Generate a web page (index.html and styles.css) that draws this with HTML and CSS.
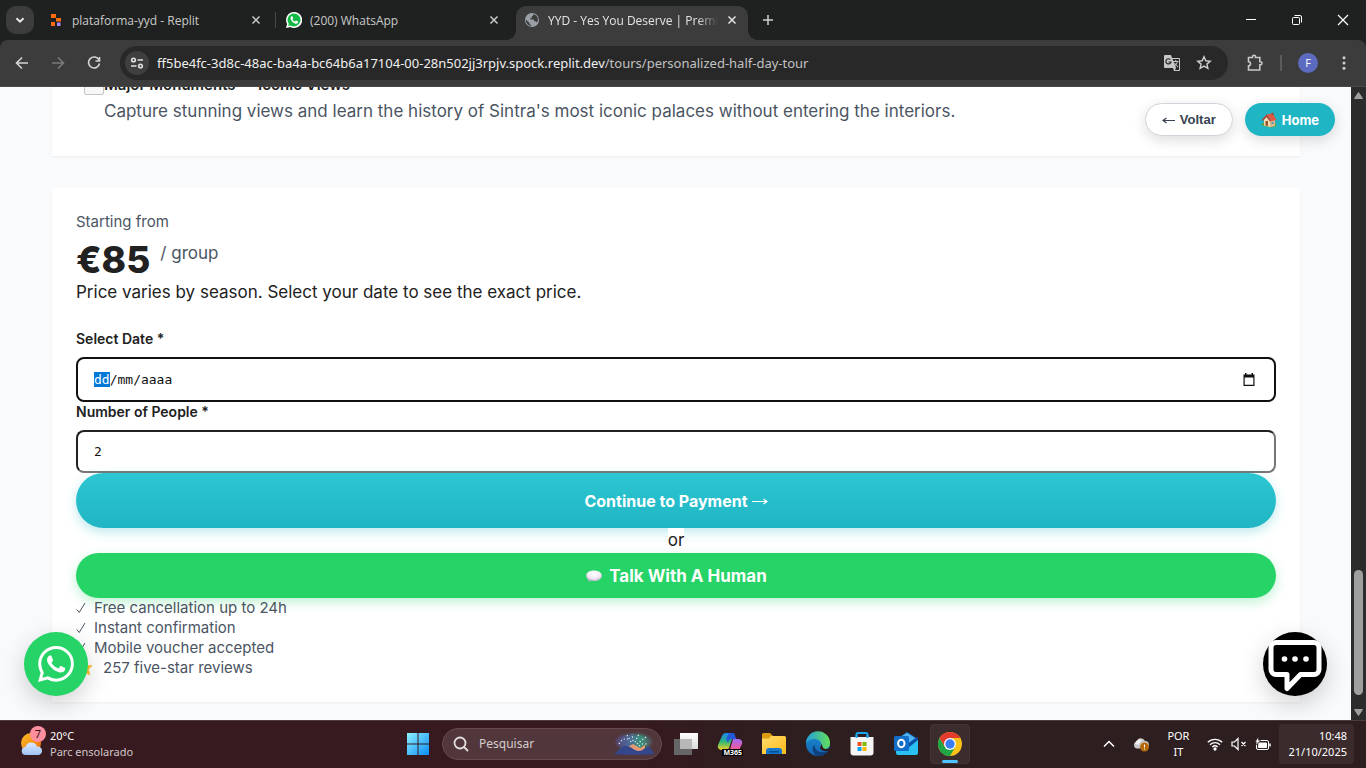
FILE: index.html
```html
<!DOCTYPE html>
<html lang="pt">
<head>
<meta charset="utf-8">
<meta name="viewport" content="width=device-width, initial-scale=1">
<title>YYD - Yes You Deserve | Premium Tours</title>
<link rel="stylesheet" href="styles.css">
</head>
<body>
<header class="tabstrip">
  <button class="tab-search" aria-label="Search tabs"><svg width="14" height="14" viewBox="0 0 14 14" fill="none" stroke="#e8e8e8" stroke-width="2"><path d="M3.5 5.2 7 8.7l3.500-3.500"/></svg></button>
  <div class="tab">
    <svg class="favicon" width="16" height="16" viewBox="0 0 16 16"><path fill="#ff6a0d" d="M3 2h5v4H3zM8 6h5v3.500H8zM3 10h4v4H3z"/><path fill="#a78bfa" d="M9 10.500h3.500V14H9z"/></svg>
    <span class="tab-title">plataforma-yyd - Replit</span>
    <button class="tab-close" aria-label="Close tab"><svg width="10" height="10" viewBox="0 0 10 10" stroke="currentColor" stroke-width="1.500"><path d="m1.500 1.500 7 7m0-7-7 7"/></svg></button>
  </div>
  <span class="tab-divider"></span>
  <div class="tab">
    <svg class="favicon" width="16" height="16" viewBox="0 0 32 32"><path fill="#fff" d="M16 0a16 16 0 1 1-7.500 30L0 32l2.200-8A16 16 0 0 1 16 0z"/><path fill="#12b944" d="M16 3a13 13 0 1 1-7 24l-4.600 1.200 1.300-4.500A13 13 0 0 1 16 3z"/><path fill="#fff" d="M11 8.500c-4 3-1 8.500 3 12s7.500 4 10 1v-2.500l-4-2-2 2c-2-.6-4-2.500-4.800-4.500l1.300-2-1.800-4z"/></svg>
    <span class="tab-title">(200) WhatsApp</span>
    <button class="tab-close" aria-label="Close tab"><svg width="10" height="10" viewBox="0 0 10 10" stroke="currentColor" stroke-width="1.500"><path d="m1.500 1.500 7 7m0-7-7 7"/></svg></button>
  </div>
  <div class="tab tab-active">
    <svg class="favicon" width="16" height="16" viewBox="0 0 16 16"><circle cx="8" cy="8" r="7" fill="#9aa0a6"/><path fill="#3c3c3c" d="M2 7.500 5.500 11v1l1.500 1v1.200A6 6 0 0 1 2 7.500zM9 2.200c3 .3 5 2.800 5 5.600l-1 2.700-1.500-1.200H10V7.500H6.500V6L8 5.500V4h1z"/></svg>
    <span class="tab-title">YYD - Yes You Deserve | Premium Tours</span>
    <button class="tab-close" aria-label="Close tab"><svg width="10" height="10" viewBox="0 0 10 10" stroke="currentColor" stroke-width="1.500"><path d="m1.500 1.500 7 7m0-7-7 7"/></svg></button>
  </div>
  <button class="new-tab" aria-label="New tab"><svg width="12" height="12" viewBox="0 0 12 12" stroke="#d0d0d0" stroke-width="1.500"><path d="M6 1v10M1 6h10"/></svg></button>
  <div class="window-controls">
    <button aria-label="Minimize"><svg width="12" height="12" viewBox="0 0 12 12" stroke="#fff" stroke-width="1"><path d="M1 5.500h10"/></svg></button>
    <button aria-label="Restore"><svg width="12" height="12" viewBox="0 0 12 12" fill="none" stroke="#fff"><rect x="1.500" y="3.500" width="7" height="7" rx="1"/><path d="M3.500 1.500H9a1.500 1.500 0 0 1 1.500 1.500v5.500"/></svg></button>
    <button aria-label="Close"><svg width="12" height="12" viewBox="0 0 12 12" stroke="#fff" stroke-width="1.200"><path d="m1 1 10 10M11 1 1 11"/></svg></button>
  </div>
</header>

<nav class="toolbar">
  <button class="tool" aria-label="Back"><svg width="14" height="14" viewBox="0 0 14 14" fill="none" stroke="#d4d4d4" stroke-width="1.600"><path d="M13 7H2m5-5.500L1.500 7 7 12.500"/></svg></button>
  <button class="tool" aria-label="Forward"><svg width="14" height="14" viewBox="0 0 14 14" fill="none" stroke="#7a7a7a" stroke-width="1.600"><path d="M1 7h11M7 1.500 12.500 7 7 12.500"/></svg></button>
  <button class="tool" aria-label="Reload"><svg width="14" height="14" viewBox="0 0 14 14" fill="none" stroke="#d4d4d4" stroke-width="1.600"><path d="M12 4A5.500 5.500 0 1 0 12.500 7.500M12.500 1v4H8.500"/></svg></button>
  <div class="omnibox">
    <button class="site-info" aria-label="Site information"><svg width="14" height="14" viewBox="0 0 14 14" fill="none" stroke="#e0e0e0" stroke-width="1.600"><circle cx="3.500" cy="4" r="1.800"/><path d="M7.500 4H13M1 10h5.500"/><circle cx="10.500" cy="10" r="1.800"/></svg></button>
    <span class="url">ff5be4fc-3d8c-48ac-ba4a-bc64b6a17104-00-28n502jj3rpjv.spock.replit.dev<span class="url-path">/tours/personalized-half-day-tour</span></span>
    <button class="omni-action" aria-label="Translate"><svg width="18" height="18" viewBox="0 0 18 18"><path fill="#c7c7c7" d="M2 1h6l1 3h7a1 1 0 0 1 1 1v11a1 1 0 0 1-1 1h-5l-1-3H2a1 1 0 0 1-1-1V2a1 1 0 0 1 1-1z"/><path fill="#282828" d="M9.500 5H16v11h-4l1-2-1-3z"/><path fill="none" stroke="#282828" stroke-width="1.200" d="M7.400 5.600A2.600 2.600 0 1 0 8 8H5.500"/><path fill="none" stroke="#c7c7c7" d="M10 7.500h5.500M12.700 6v1.500M14.500 7.500c-.5 2-1.500 3-3 4.500m0-3 3.500 4"/></svg></button>
    <button class="omni-action" aria-label="Bookmark"><svg width="16" height="16" viewBox="0 0 16 16" fill="none" stroke="#d0d0d0" stroke-width="1.400"><path d="m8 1.800 1.800 4 4.400.4-3.300 2.900 1 4.300L8 11.100l-3.900 2.300 1-4.300-3.300-2.900 4.400-.4z"/></svg></button>
  </div>
  <button class="tool" aria-label="Extensions"><svg width="18" height="18" viewBox="0 0 18 18" fill="none" stroke="#c7c7c7" stroke-width="1.600"><path d="M3.500 3.500h4V2.800a1.500 1.500 0 0 1 3 0v.7h4.300v4.200h.7a1.500 1.500 0 0 1 0 3h-.7V16H3.500v-4.200a2 2 0 0 0 0-4z"/></svg></button>
  <span class="tool-divider"></span>
  <button class="tool" aria-label="Profile"><span class="avatar">F</span></button>
  <button class="tool tool-last" aria-label="Menu"><svg width="4" height="14" viewBox="0 0 4 14" fill="#d0d0d0"><circle cx="2" cy="1.800" r="1.500"/><circle cx="2" cy="7" r="1.500"/><circle cx="2" cy="12.200" r="1.500"/></svg></button>
</nav>

<div class="viewport">
  <main class="page">
    <section class="card itinerary">
      <span class="missing-icon"></span>
      <div>
        <h3 class="stop-title">Major Monuments — Iconic Views</h3>
        <p class="stop-text">Capture stunning views and learn the history of Sintra's most iconic palaces without entering the interiors.</p>
      </div>
    </section>

    <form class="card booking" onsubmit="return false">
      <p class="small muted">Starting from</p>
      <p class="price"><strong>€85</strong><span class="muted">/ group</span></p>
      <p class="price-note">Price varies by season. Select your date to see the exact price.</p>

      <label class="label" for="date">Select Date *</label>
      <div class="date-field">
        <input class="input-text" id="date" type="text" value="dd/mm/aaaa" autocomplete="off" spellcheck="false">
        <button class="calendar" type="button" aria-label="Open calendar"><svg width="14" height="14" viewBox="0 0 14 14"><path fill="#111" d="M3 0h1.500v1.500h5V0H11v1.500h1.500V13h-11V1.500H3zM2.700 4.500v7.300h8.600V4.500z"/></svg></button>
      </div>
      <label class="label" for="people">Number of People *</label>
      <input class="input-text people" id="people" type="number" value="2">

      <button class="btn btn-pay" type="submit">Continue to Payment <svg width="16" height="10" viewBox="0 0 16 10" fill="none" stroke="#fff" stroke-width="1.200"><path d="M0 5.500h14.500M11.500 3 15 5.500 11.500 8"/></svg></button>
      <p class="or"><span>or</span></p>
      <button class="btn btn-human" type="button"><svg width="18" height="14" viewBox="0 0 18 14"><defs><radialGradient id="bub" cx=".5" cy=".3" r=".7"><stop offset="0" stop-color="#fff"/><stop offset=".6" stop-color="#f1e9f4"/><stop offset="1" stop-color="#bda9cb"/></radialGradient></defs><path fill="url(#bub)" d="M9 1.500c4.600 0 7.800 2.200 7.800 5.200S13.600 12 9 12c-1.200 0-2.300-.1-3.200-.4-.8.6-1.900 1-3 .9.600-.5.800-1.200.7-1.900C2 9.700 1.200 8.300 1.200 6.700c0-3 3.200-5.200 7.800-5.200z"/></svg>Talk With A Human</button>

      <ul class="perks small muted">
        <li><svg width="10" height="12" viewBox="0 0 10 12" fill="none" stroke="currentColor"><path d="M.8 7.500 3.200 10.500 9 1"/></svg>Free cancellation up to 24h</li>
        <li><svg width="10" height="12" viewBox="0 0 10 12" fill="none" stroke="currentColor"><path d="M.8 7.500 3.200 10.500 9 1"/></svg>Instant confirmation</li>
        <li><svg width="10" height="12" viewBox="0 0 10 12" fill="none" stroke="currentColor"><path d="M.8 7.500 3.200 10.500 9 1"/></svg>Mobile voucher accepted</li>
        <li><svg width="19" height="18" viewBox="0 0 19 18"><path fill="#fbc02d" d="m9 1 2.300 5 5.400.6-4 3.700 1.600 6.200L9 13.800l-4.800 2.700 1.100-6.200-4-3.700L6.700 6z"/></svg>257 five-star reviews</li>
      </ul>
    </form>

    <div class="quick-nav">
      <button class="pill pill-back"><svg width="13" height="10" viewBox="0 0 13 10" fill="none" stroke="currentColor" stroke-width="1.200"><path d="M13 5.500H1m3.500-2.500L1 5.500 4.500 8"/></svg>Voltar</button>
      <a class="pill pill-home" href="#"><svg width="16" height="16" viewBox="0 0 16 16"><path fill="#5fa640" d="M1 11h14v3.500l-5 1-9-2z"/><path fill="#f0dcb0" d="M3 7.500 5.500 5 9 9v6l-6-1.500z"/><path fill="#d9b988" d="M9 8h5v6l-5 1.200z"/><path fill="#de5a45" d="m5.500 2.500 6-1.200L15.500 8 10 9.300z"/><path fill="#b83e33" d="m.8 8 4.700-5.500L10 9l-.8.800L5.500 5 1.700 9z"/><path fill="#9a5330" d="M4.500 9H7v5l-2.500-.6z"/><path fill="#4a9cc7" d="M10.500 10h2v2h-2z"/><path fill="#a8442f" d="M10.500.8h2v2.500h-2z"/></svg>Home</a>
    </div>

    <a class="fab fab-whatsapp" href="#" aria-label="WhatsApp"><svg width="36" height="36" viewBox="0 0 24 24" fill="#fff"><path d="M17.472 14.382c-.297-.149-1.758-.867-2.030-.967-.273-.099-.471-.148-.670.150-.197.297-.767.966-.940 1.164-.173.199-.347.223-.644.075-.297-.150-1.255-.463-2.390-1.475-.883-.788-1.480-1.761-1.653-2.059-.173-.297-.018-.458.130-.606.134-.133.298-.347.446-.520.149-.174.198-.298.298-.497.099-.198.050-.371-.025-.520-.075-.149-.669-1.612-.916-2.207-.242-.579-.487-.500-.669-.510-.173-.008-.371-.010-.570-.010-.198 0-.520.074-.792.372-.272.297-1.040 1.016-1.040 2.479 0 1.462 1.065 2.875 1.213 3.074.149.198 2.096 3.200 5.077 4.487.709.306 1.262.489 1.694.625.712.227 1.360.195 1.871.118.571-.085 1.758-.719 2.006-1.413.248-.694.248-1.289.173-1.413-.074-.124-.272-.198-.570-.347m-5.421 7.403h-.004a9.870 9.870 0 0 1-5.031-1.378l-.361-.214-3.741.982.998-3.648-.235-.374a9.860 9.860 0 0 1-1.510-5.260c.001-5.450 4.436-9.884 9.888-9.884 2.640 0 5.122 1.030 6.988 2.898a9.825 9.825 0 0 1 2.893 6.994c-.003 5.450-4.437 9.884-9.885 9.884m8.413-18.297A11.815 11.815 0 0 0 12.050 0C5.495 0 .160 5.335.157 11.892c0 2.096.547 4.142 1.588 5.945L.057 24l6.305-1.654a11.882 11.882 0 0 0 5.683 1.448h.005c6.554 0 11.890-5.335 11.893-11.893a11.821 11.821 0 0 0-3.480-8.413z"/></svg></a>
    <button class="fab fab-chat" aria-label="Chat"><svg width="64" height="64" viewBox="0 0 64 64"><path d="M13 10.500h38a5 5 0 0 1 5 5v22a5 5 0 0 1-5 5H37.500L24 56.500V42.500H13a5 5 0 0 1-5-5v-22a5 5 0 0 1 5-5z" fill="none" stroke="#fff" stroke-width="5" stroke-linejoin="round"/><g fill="#fff"><circle cx="21.500" cy="27" r="2.800"/><circle cx="32" cy="27" r="2.800"/><circle cx="43" cy="27" r="2.800"/></g></svg></button>
  </main>
  <div class="scrollbar">
    <svg width="9" height="9" viewBox="0 0 9 9" fill="#9f9f9f" stroke="#9f9f9f" stroke-linejoin="round"><path d="M4.500 1.500 8.500 7.500h-8z"/></svg>
    <span class="thumb"></span>
    <svg width="9" height="9" viewBox="0 0 9 9" fill="#9f9f9f" stroke="#9f9f9f" stroke-linejoin="round"><path d="M4.500 7.500.5 1.500h8z"/></svg>
  </div>
</div>

<footer class="taskbar">
  <div class="weather">
    <div class="weather-icon">
      <svg width="24" height="24" viewBox="0 0 24 24"><defs><linearGradient id="sun" x1="0" y1="0" x2="1" y2="1"><stop offset="0" stop-color="#fbbf24"/><stop offset="1" stop-color="#ee6a10"/></linearGradient><linearGradient id="cl" x1="0" y1="0" x2="0" y2="1"><stop offset="0" stop-color="#dcebff"/><stop offset="1" stop-color="#9fc1f5"/></linearGradient></defs><circle cx="11" cy="11" r="10" fill="url(#sun)"/><path fill="url(#cl)" d="M6 23a4 4 0 0 1-.5-8 6 6 0 0 1 11.500-.5A4.300 4.300 0 0 1 18.500 23z"/></svg>
      <span class="badge">7</span>
    </div>
    <div><div class="temp">20°C</div><div class="sky">Parc ensolarado</div></div>
  </div>

  <div class="apps">
    <button class="app" aria-label="Start"><svg width="24" height="24" viewBox="0 0 24 24"><defs><linearGradient id="win" x1="0" y1="0" x2="1" y2="1"><stop offset="0" stop-color="#8df1ff"/><stop offset="1" stop-color="#0a8df5"/></linearGradient></defs><path fill="url(#win)" d="M1 1h10.500v10.500H1zm11.500 0H23v10.500H12.500zM1 12.500h10.500V23H1zm11.500 0H23V23H12.500z"/></svg></button>
    <label class="search"><svg width="16" height="16" viewBox="0 0 16 16" fill="none" stroke="#e6dfe0" stroke-width="1.800"><circle cx="7" cy="7" r="5.500"/><path d="m11 11 4 4"/></svg><input type="search" placeholder="Pesquisar" aria-label="Pesquisar"><svg width="42" height="24" viewBox="0 0 42 24"><defs><linearGradient id="sky"><stop offset="0" stop-color="#54467f"/><stop offset=".4" stop-color="#4c6d99"/><stop offset=".7" stop-color="#35937c"/><stop offset="1" stop-color="#5b4c5d"/></linearGradient><filter id="soft"><feGaussianBlur stdDeviation="1.800"/></filter></defs><ellipse cx="21" cy="10" rx="18" ry="8" fill="url(#sky)" filter="url(#soft)"/><path fill="#e39a72" d="M11 17l9-5 7 4 5-3v9H11z"/><path fill="#34478c" d="M1 22c3-1 6-8 12-8 5 0 8 5 13 5 4 0 6-4 9-4s4 3 6 7c-3 1-37 1-40 0z"/><path stroke="#f5f2e4" stroke-width="1.200" stroke-dasharray="1.200 2.200" fill="none" d="M6 12q3-6 9-5M18 10l-4-7m6 6-1-7m3 8 4-8m-2 10 9-7m-7 9q5-4 9-1"/></svg></label>
    <button class="app" aria-label="Task view"><svg width="26" height="24" viewBox="0 0 26 24"><defs><linearGradient id="tv" x1="0" y1="0" x2="0" y2="1"><stop offset="0" stop-color="#fff"/><stop offset="1" stop-color="#d9d9d9"/></linearGradient></defs><path fill="url(#tv)" d="M7 1h18v16H7z"/><path fill="#666" d="M1 7h18v16H1z"/><path fill="#b8b8b8" d="M7 7h12v10H7z"/></svg></button>
    <button class="app" aria-label="Microsoft 365"><svg width="26" height="24" viewBox="0 0 26 24"><defs><linearGradient id="m1" x1="0" y1="0" x2="0" y2="1"><stop offset="0" stop-color="#1987ed"/><stop offset=".5" stop-color="#2cb77c"/><stop offset="1" stop-color="#f4d321"/></linearGradient><linearGradient id="m2" x1="0" y1="0" x2="0" y2="1"><stop offset="0" stop-color="#a06bf3"/><stop offset=".6" stop-color="#e45ba7"/><stop offset="1" stop-color="#fa7a5a"/></linearGradient></defs><path fill="url(#m1)" d="M9 1h8l-5 15q-1 2-3 2H4q-4-1-3-5L5 4q1-3 4-3z"/><path fill="#2358d8" d="M12 1h4q2 0 3 6h-5q-2 0-3 4L9 7z"/><path fill="url(#m2)" d="M16 7h6q4 1 3 5l-3 6q-1 3-3 3h-7z"/></svg><span class="m365">M365</span></button>
    <button class="app" aria-label="File Explorer"><svg width="26" height="24" viewBox="0 0 26 24"><defs><linearGradient id="fo" x1="0" y1="0" x2="1" y2="1"><stop offset="0" stop-color="#ffdc6d"/><stop offset="1" stop-color="#fdbb18"/></linearGradient></defs><path fill="#dc9c11" d="M2.500 1H9l3 3v5H1V2.500A1.500 1.500 0 0 1 2.500 1z"/><path fill="url(#fo)" d="M10 4h13.500A1.500 1.500 0 0 1 25 5.500V22H1V6.500h7z"/><path fill="#1377cc" d="M5 22v-3a3 3 0 0 1 3-3h10a3 3 0 0 1 3 3v3z"/><path fill="#0a4d91" d="M8 19h10v1.500H8z"/></svg></button>
    <button class="app" aria-label="Edge"><svg width="26" height="26" viewBox="0 0 26 26"><defs><linearGradient id="e1" x1="0" y1="0" x2="1" y2="0"><stop offset="0" stop-color="#249fdd"/><stop offset="1" stop-color="#62df58"/></linearGradient><linearGradient id="e2" x1="0" y1="0" x2="0" y2="1"><stop offset="0" stop-color="#1b8fd7"/><stop offset="1" stop-color="#1461ae"/></linearGradient></defs><circle cx="13" cy="13" r="12" fill="url(#e2)"/><path fill="url(#e1)" d="M1 12.500A12 12 0 0 1 25 12c0 4-3 6-6 6-2 0-4-1-4-2s1-1 1-3c0-3-3-5-7-5-5 0-8 4-8 4.500z"/><path fill="#0d3f7c" d="M9.500 14c0 6 6 9 13 6-2 3-5 5-9.500 5-5-1-7-9-3.500-11z"/><path fill="#2e1d1e" d="M15 16c1-1 1.400-2 .9-3.500C18 14.500 17 18 21 18c1.800 0 3.300-.8 4-1.800l-1.500 3.300c-4 1.500-8.500 0-8.500-3.500z"/></svg></button>
    <button class="app" aria-label="Store"><svg width="26" height="26" viewBox="0 0 26 26"><path fill="none" stroke="#1ca6ed" stroke-width="2" d="M7.500 8V3.500a1.500 1.500 0 0 1 1.500-1.500h8a1.500 1.500 0 0 1 1.500 1.500V8"/><path fill="#f5f5f5" d="M1.500 6h23v15.500a3 3 0 0 1-3 3h-17a3 3 0 0 1-3-3z"/><path fill="none" stroke="#1ca6ed" stroke-width="2" d="M7.500 4v3M18.500 4v3"/><path fill="#f25022" d="M8.500 11h4v4h-4z"/><path fill="#7fba00" d="M13.500 11h4v4h-4z"/><path fill="#00a4ef" d="M8.500 16h4v4h-4z"/><path fill="#ffb900" d="M13.500 16h4v4h-4z"/></svg></button>
    <button class="app" aria-label="Outlook"><svg width="26" height="26" viewBox="0 0 26 26"><path fill="#1479ce" d="M4 8 14 1l11 7v12H4z"/><path fill="#50b3f2" d="m9 5 5-3 8 5-8 7z"/><path fill="#29c1f2" d="M3 19h0l22-11v14a2 2 0 0 1-2 2H5a2 2 0 0 1-2-2z"/><path fill="#0b4ea5" d="m14 13 11-7v3l-10 8z"/><rect x="1" y="5" width="15" height="15" rx="1.500" fill="#126ec9"/><ellipse cx="8.300" cy="12.500" rx="3.200" ry="3.800" fill="none" stroke="#fff" stroke-width="2"/></svg></button>
    <button class="app app-active" aria-label="Chrome"><svg width="26" height="26" viewBox="0 0 26 26"><circle cx="13" cy="13" r="12" fill="#fbc116"/><path fill="#e33b2e" d="M2.600 7A12 12 0 0 1 23.400 7H13l-5.200 9z"/><path fill="#1fa446" d="M2.600 7A12 12 0 0 0 13 25l5.200-9H7.800z"/><circle cx="13" cy="13" r="6" fill="#fff"/><circle cx="13" cy="13" r="4.700" fill="#3a7df0"/></svg></button>
  </div>

  <div class="tray">
    <svg width="12" height="8" viewBox="0 0 12 8" fill="none" stroke="#fff" stroke-width="1.500"><path d="m1 6.500 5-5 5 5"/></svg>
    <svg class="cloud" width="16" height="16" viewBox="0 0 16 16"><path fill="#c9c9c9" d="M4 12.500A3.600 3.600 0 0 1 3.500 5.500 4.500 4.500 0 0 1 12 5a3.800 3.800 0 0 1 1 7.500z"/><path fill="#f1f1f1" d="M2 7.500a5 5 0 0 1 7-3.500L5 9z"/><circle cx="11.500" cy="11" r="4.500" fill="#b5690b"/><path stroke="#fff" d="M11.500 8.500v3m0 1v1"/></svg>
    <div class="lang">POR<br>IT</div>
    <div class="status">
      <svg width="16" height="14" viewBox="0 0 16 14" fill="none" stroke="#fff" stroke-width="1.300"><path d="M.8 5.300a10.200 10.200 0 0 1 14.400 0M3 7.700a7 7 0 0 1 10 0M5.300 10a4 4 0 0 1 5.400 0"/><circle cx="8" cy="12" r="1" fill="#fff"/></svg>
      <svg width="16" height="14" viewBox="0 0 16 14" fill="none" stroke="#fff"><path stroke-width="1.200" d="M1 5h2.500L7 1.500v11L3.500 9H1zM10.500 5l4 4m0-4-4 4"/></svg>
      <svg width="16" height="14" viewBox="0 0 16 14" fill="none" stroke="#fff"><rect x="1.500" y="3.500" width="12" height="9" rx="1.500"/><path fill="#fff" d="M4 6h7.500v4.500h-8z"/><path stroke-width="1.500" d="M15 6.500v3"/><path fill="#fff" stroke="#2e1d1e" stroke-width=".6" d="M3.500 0 0 5h2L1.500 8 5.500 3.500h-2z"/></svg>
    </div>
    <div class="clock">10:48<br>21/10/2025</div>
  </div>
</footer>
<script src="app.js"></script>
</body>
</html>
```
FILE: styles.css
```css
* { box-sizing: border-box; }
body {
  margin: 0;
  height: 100vh;
  display: flex;
  flex-direction: column;
  overflow: hidden;
  font-family: "Open Sans", "Noto Sans", sans-serif;
  font-size: 12px;
  background: #1f2120;
}
button {
  border: 0;
  padding: 0;
  background: none;
  font: inherit;
  color: inherit;
  display: flex;
  align-items: center;
  justify-content: center;
}
svg { display: block; flex: none; }
p, h3, ul { margin: 0; padding: 0; }

/* Tab strip */
.tabstrip {
  height: 40px;
  flex: none;
  display: flex;
  align-items: center;
  padding-left: 6px;
  background: #1f2120;
  color: #c9c9c9;
}
.tab-search {
  width: 28px;
  height: 28px;
  border-radius: 10px;
  background: #3c3c3c;
  margin-right: 3px;
}
.tab {
  width: 232px;
  height: 34px;
  margin: 6px 3px 0;
  padding: 0 10px 6px 8px;
  display: flex;
  align-items: center;
  gap: 8px;
  border-radius: 10px 10px 0 0;
}
.tab-divider { width: 1px; height: 16px; margin-right: -1px; background: #464746; }
.tab-active { background: #3c3c3c; color: #e4e4e4; position: relative; }
.tab-active::before,
.tab-active::after {
  content: "";
  position: absolute;
  bottom: 0;
  width: 10px;
  height: 10px;
}
.tab-active::before { right: 100%; background: radial-gradient(circle at 0 0, transparent 10px, #3c3c3c 10px); }
.tab-active::after { left: 100%; background: radial-gradient(circle at 100% 0, transparent 10px, #3c3c3c 10px); }
.tab-title { flex: 1; overflow: hidden; white-space: nowrap; }
.tab-active .tab-title { mask-image: linear-gradient(90deg, #000 88%, transparent); }
.tab-close { width: 12px; height: 16px; }
.new-tab { width: 28px; height: 28px; margin-left: 3px; }
.window-controls { margin-left: auto; display: flex; align-self: stretch; }
.window-controls button { width: 46px; }

/* Toolbar */
.toolbar {
  height: 47px;
  flex: none;
  display: flex;
  align-items: center;
  gap: 8px;
  padding: 0 8px 1px;
  background: #3c3c3c;
  border-radius: 8px 8px 0 0;
  border-bottom: 1px solid #484848;
}
.tool { width: 28px; height: 28px; flex: none; }
.omnibox {
  flex: 1;
  min-width: 0;
  height: 34px;
  margin: 0 4px;
  padding: 0 15px 0 5px;
  display: flex;
  align-items: center;
  border-radius: 17px;
  background: #282828;
}
.site-info { width: 24px; height: 24px; border-radius: 50%; background: #3f3f3f; margin-right: 8px; }
.url {
  flex: 1;
  overflow: hidden;
  white-space: nowrap;
  font-family: "Noto Sans", "Open Sans", sans-serif;
  font-size: 13px;
  color: #f0f0f0;
}
.url-path { color: #c2c2c2; }
.omni-action { width: 18px; margin-left: 14px; }
.tool-divider { width: 2px; height: 16px; margin: 0 4px; background: #5b5b5b; }
.avatar {
  width: 20px;
  height: 20px;
  border-radius: 50%;
  background: #5c6bc0;
  color: #fff;
  font-size: 11px;
  line-height: 20px;
}

/* Page */
.viewport { flex: 1; min-height: 0; display: flex; }
.page {
  flex: 1;
  min-width: 0;
  position: relative;
  overflow: hidden;
  display: flex;
  flex-direction: column;
  justify-content: flex-end;
  gap: 32px;
  padding: 0 51px 18px 52px;
  background: #f9fafc;
  font-family: Inter, "Open Sans", sans-serif;
  font-size: 17px;
  line-height: 26px;
  color: #212121;
}
.card { flex: none; background: #fff; box-shadow: 0 1px 2px rgba(0, 0, 0, .05); }
.muted { color: #4b5563; }
.small { font-size: 15px; line-height: 20px; }
.itinerary { display: flex; padding: 24px 32px 32px; }
.missing-icon {
  width: 20px;
  height: 26px;
  margin-top: -3px;
  border: 1px solid #c4c4c4;
  border-radius: 2px;
  background: #f7f7f7;
}
.stop-title { font-size: 15px; font-weight: 600; line-height: 26px; }
.stop-text { color: #4b5563; }

.booking { padding: 24px; display: flex; flex-direction: column; }
.price { display: flex; gap: 10px; height: 47px; padding-top: 8px; }
.price strong { font-size: 37px; line-height: 40px; font-weight: 800; }
.price-note { margin-bottom: 24px; }
.label { font-size: 14px; font-weight: 600; line-height: 20px; margin-bottom: 8px; }
.date-field {
  display: flex;
  align-items: center;
  height: 45px;
  padding: 0 18px 0 16px;
  border: 2px solid #111;
  border-radius: 8px;
}
.input-text {
  width: 100%;
  font-family: "DejaVu Sans Mono", monospace;
  font-size: 13px;
  color: #111;
  background: none;
}
.date-field .input-text { flex: 1; border: 0; padding: 0; outline: 0; }
.date-field .input-text::selection { background: #0078d7; color: #fff; }
.people {
  height: 43px;
  padding: 0 16px;
  border: 2px inset #767676;
  border-radius: 8px;
}
.btn { border-radius: 28px; color: #fff; font-weight: 700; gap: 6px; }
.btn-pay {
  height: 55px;
  font-size: 16px;
  gap: 4px;
  background: linear-gradient(#2dc6d3, #20b5c3);
  box-shadow: 0 4px 12px rgba(33, 182, 196, .3);
}
.or { text-align: center; line-height: 25px; }
.or span { display: inline-block; background: #fff; }
.btn-human {
  height: 45px;
  background: #25d366;
  box-shadow: 0 4px 12px rgba(37, 211, 102, .3);
}
.perks { list-style: none; }
.perks li { display: flex; align-items: center; gap: 8px; }

.quick-nav { position: absolute; top: 16px; right: 16px; display: flex; gap: 12px; }
.pill {
  height: 33px;
  padding: 0 16px;
  display: flex;
  align-items: center;
  gap: 5px;
  border-radius: 17px;
  font-size: 13px;
  font-weight: 700;
  text-decoration: none;
  box-shadow: 0 4px 14px rgba(0, 0, 0, .14);
}
.pill-back { font-family: "Liberation Sans", sans-serif; color: #374151; background: #fff; border: 1px solid #d1d5db; }
.pill-home { color: #fff; background: #1fb5c4; }
.fab {
  position: absolute;
  bottom: 24px;
  width: 64px;
  height: 64px;
  display: flex;
  align-items: center;
  justify-content: center;
  border-radius: 50%;
  box-shadow: 0 8px 24px rgba(0, 0, 0, .18);
}
.fab-whatsapp { left: 24px; background: #25d366; }
.fab-chat { right: 24px; background: #000; }

.scrollbar {
  width: 15px;
  flex: none;
  display: flex;
  flex-direction: column;
  align-items: center;
  justify-content: space-between;
  padding: 4px 0 3px;
  background: #2c2c2c;
}
.thumb { width: 9px; height: 20%; margin-top: auto; margin-bottom: 13px; border-radius: 5px; background: #9f9f9f; }

/* Taskbar */
.taskbar {
  height: 48px;
  flex: none;
  display: grid;
  grid-template-columns: 1fr auto 1fr;
  align-items: center;
  padding: 0 12px 2px 14px;
  background: linear-gradient(90deg, #371a1f 0%, #371a1f 45%, #2d1e1f 58%, #2d1e1f 100%);
  border-top: 1px solid #4d3b3d;
  color: #fff;
  font-family: "Noto Sans", "Open Sans", sans-serif;
}
.weather { display: flex; align-items: center; gap: 6px; padding-left: 6px; font-size: 11px; line-height: 16px; }
.weather-icon { position: relative; }
.badge {
  position: absolute;
  top: -6px;
  right: -2px;
  width: 16px;
  border-radius: 50%;
  background: #ff8f9e;
  color: #2a1215;
  text-align: center;
}
.sky { color: #cfc6c8; }
.apps { display: flex; align-items: center; gap: 4px; }
.app { position: relative; width: 40px; height: 40px; border-radius: 4px; }
.app-active { background: #3b2d2e; border: 1px solid #423536; }
.app-active::after {
  content: "";
  position: absolute;
  bottom: 0;
  width: 16px;
  height: 3px;
  border-radius: 2px;
  background: #4cc2ff;
}
.m365 {
  position: absolute;
  right: 7px;
  bottom: 8px;
  padding: 0 1px;
  font-size: 7px;
  line-height: 7px;
  font-weight: 700;
  background: #000;
}
.search {
  width: 220px;
  height: 32px;
  display: flex;
  align-items: center;
  gap: 10px;
  padding: 0 6px 0 10px;
  border: 1px solid #65494d;
  border-radius: 16px;
  background: #51373b;
}
.search input { flex: 1; min-width: 0; border: 0; padding: 0; background: none; font: inherit; font-size: 12px; color: #fff; }
.search input::placeholder { color: #d6cccd; }
.tray { display: flex; align-items: center; justify-content: flex-end; line-height: 16px; font-size: 11px; }
.cloud { margin: 0 18px; }
.lang { text-align: center; }
.status { display: flex; gap: 8px; margin: 0 8px 0 18px; }
.clock { padding: 4px 7px 4px 9px; border-radius: 4px; background: #3b2b2d; text-align: right; }
```
FILE: app.js
```js
const dateInput = document.getElementById("date");
dateInput.focus({ preventScroll: true });
dateInput.setSelectionRange(0, 2);
```
